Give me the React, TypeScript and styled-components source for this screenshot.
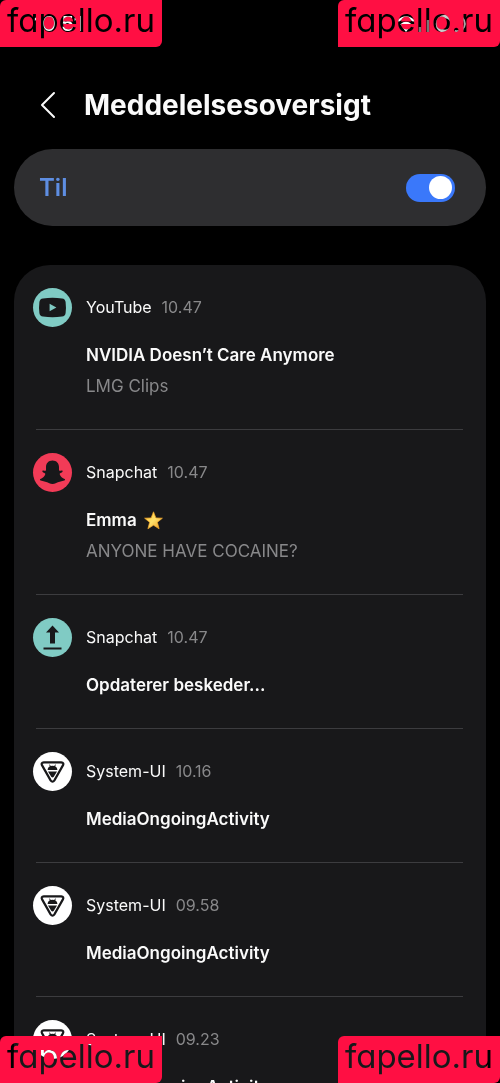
import React from "react";
import styled, { createGlobalStyle } from "styled-components";

const GlobalStyle = createGlobalStyle`
  * { box-sizing: border-box; }
  body {
    margin: 0;
    background: #000;
    color: #fafafa;
    font-family: Inter, "Noto Sans", sans-serif;
  }
`;

const Page = styled.div`
  position: relative;
  isolation: isolate;
  height: 100vh;
  overflow: hidden;
  background: #000;
`;

const StatusBar = styled.div`
  display: flex;
  align-items: center;
  justify-content: space-between;
  height: 48px;
  padding: 0 32px 0 34px;
`;

const Clock = styled.time`
  font-size: 20px;
  font-weight: 600;
  line-height: 24px;
`;

const Header = styled.header`
  display: flex;
  align-items: center;
  gap: 24px;
  height: 101px;
  padding: 12px 36px 0;
`;

const BackButton = styled.button`
  display: flex;
  padding: 0;
  border: 0;
  background: none;
  color: inherit;
`;

const Heading = styled.h1`
  margin: 0;
  font-size: 28px;
  font-weight: 700;
  line-height: 36px;
`;

const SwitchCard = styled.label`
  display: flex;
  align-items: center;
  justify-content: space-between;
  height: 77px;
  margin: 0 14px 39px;
  padding: 0 31px 0 25px;
  border-radius: 39px;
  background: #2e2e30;
  color: #5e8ee2;
  font-size: 24px;
  font-weight: 600;
`;

const Switch = styled.input`
  appearance: none;
  display: flex;
  align-items: center;
  justify-content: flex-start;
  width: 49px;
  height: 28px;
  margin: 0;
  padding: 0 3px;
  border-radius: 14px;
  background: #5a5a5e;

  &::before {
    content: "";
    width: 23px;
    height: 23px;
    border-radius: 50%;
    background: #fff;
  }

  &:checked {
    justify-content: flex-end;
    background: #3a78fa;
  }
`;

const List = styled.ul`
  margin: 0 14px;
  padding: 0;
  border-radius: 36px 36px 0 0;
  background: #18181a;
  list-style: none;
`;

const Item = styled.li`
  padding-top: 23px;
`;

const ItemHead = styled.div`
  display: flex;
  align-items: center;
  padding: 0 19px;
  font-size: 16px;
  line-height: 39px;
`;

const Badge = styled.span<{ $color: string }>`
  display: flex;
  width: 39px;
  height: 39px;
  margin-right: 14px;
  border-radius: 50%;
  background: ${(p) => p.$color};
`;

const Time = styled.time`
  margin-left: 10px;
  color: #88888a;
`;

const ItemBody = styled.div`
  padding: 13px 24px 27px 72px;
`;

const Title = styled.h2`
  display: flex;
  align-items: center;
  gap: 7px;
  margin: 0;
  font-size: 17px;
  font-weight: 600;
  line-height: 31px;
`;

const Text = styled.p`
  margin: 0;
  color: #88888a;
  font-size: 17px;
  line-height: 31px;
`;

const Divider = styled.hr`
  height: 1px;
  margin: 0 23px 0 22px;
  border: 0;
  background: #3c3c3f;
`;

/* A corner stamp whose letters are cut out, so the content below shows
   through them: the label multiplies, the red plate is screened on top. */
const Stamp = styled.div<{ $v: "top" | "bottom"; $h: "left" | "right" }>`
  position: absolute;
  ${(p) => p.$v}: 0;
  ${(p) => p.$h}: 0;
  width: 162px;
  height: 47px;
  color: #fff;
  font-size: 33px;
  line-height: 41px;
  font-feature-settings: "cv11";
  text-align: center;
  white-space: nowrap;
`;

const StampLabel = styled.span`
  display: block;
  height: 100%;
  border-radius: 6px 0 6px 0;
  background: #000;
  mix-blend-mode: multiply;
`;

const StampPlate = styled.span`
  position: absolute;
  inset: 0;
  border-radius: 6px 0 6px 0;
  background: #ff0f43;
  color: #000;
  mix-blend-mode: screen;

  &::before { content: "fapello.ru"; }
`;

type Kind = "youtube" | "ghost" | "upload" | "system";

const colors: Record<Kind, string> = {
  youtube: "#80cbc4",
  ghost: "#f23b57",
  upload: "#80cbc4",
  system: "#ffffff",
};

function Glyph({ kind }: { kind: Kind }) {
  const ink = "#18181a";
  return (
    <svg width="39" height="39" viewBox="0 0 39 39" aria-hidden="true">
      {kind === "youtube" && (
        <path
          fill={ink}
          fillRule="evenodd"
          d="M10 10.4Q19.500 9 29 10.400Q32.200 10.800 32.600 14Q33.300 19.500 32.600 25Q32.200 28.200 29 28.600Q19.500 30 10 28.600Q6.800 28.200 6.400 25Q5.700 19.500 6.400 14Q6.800 10.800 10 10.400ZM16.600 15.700V23.300L23.400 19.500Z"
        />
      )}
      {kind === "ghost" && (
        <path
          fill={ink}
          d="M19.500 7.400C23.500 7.400 26 10.200 26 14V17.600C27 18 28.200 17.200 29.200 17.500C30.300 18 29.500 19.200 28.200 19.800C27.200 20.200 26.400 20.500 26.800 21.600C27.600 23.600 29.400 25.400 31.600 26.100C32.300 26.400 32.100 27.200 31.300 27.600C29.500 28.300 27.500 28.600 25.800 29C23.500 29.500 22 31 19.500 31C17 31 15.500 29.500 13.200 29C11.500 28.600 9.500 28.300 7.700 27.600C6.900 27.200 6.700 26.400 7.400 26.100C9.600 25.400 11.400 23.600 12.200 21.600C12.600 20.500 11.800 20.200 10.800 19.800C9.500 19.200 8.700 18 9.800 17.500C10.800 17.200 12 18 13 17.600V14C13 10.200 15.500 7.400 19.500 7.400Z"
        />
      )}
      {kind === "upload" && (
        <path fill={ink} d="M19.500 7.500L26 14.500H22V25.500H17V14.500H13ZM10.500 29.500H28.500V31.500H10.500Z" />
      )}
      {kind === "system" && (
        <>
          <path
            d="M10.800 10.300H28.200Q31.300 10.600 29.900 13.400L21.400 28.300Q19.500 31 17.600 28.300L9.100 13.400Q7.700 10.600 10.800 10.300Z"
            fill="none"
            stroke={ink}
            strokeWidth="2.2"
          />
          <path
            fill={ink}
            d="M14.600 18C14.800 16 15.800 14.900 16.900 14.300L16.100 12.700L16.800 12.400L17.700 13.900Q19.500 13.400 21.300 13.900L22.200 12.400L22.900 12.700L22.100 14.300C23.200 14.900 24.200 16 24.400 18ZM15 19.500H24L20.800 24.800Q19.500 26.400 18.200 24.800Z"
          />
        </>
      )}
    </svg>
  );
}

function Star() {
  return (
    <svg width="19" height="19" viewBox="0 0 19 19" role="img" aria-label="star">
      <defs>
        <linearGradient id="gold" x1="0" y1="0" x2="1" y2="1">
          <stop offset="0" stopColor="#ffc52e" />
          <stop offset="0.5" stopColor="#ffe06a" />
          <stop offset="1" stopColor="#f09a1a" />
        </linearGradient>
      </defs>
      <path
        d="M9.500 .8L11.900 6.900L18.400 7.200L13.400 11.300L15.100 17.800L9.500 14.200L3.900 17.800L5.600 11.300L.6 7.200L7.100 6.900Z"
        fill="url(#gold)"
        stroke="#f0a52a"
        strokeWidth=".7"
        strokeLinejoin="round"
      />
    </svg>
  );
}

function StatusIcons() {
  return (
    <svg width="72" height="20" viewBox="0 0 72 20" fill="none" stroke="#fff" aria-hidden="true">
      <path d="M2 7Q10 0 18 7M5 11Q10 7 15 11" strokeWidth="2.200" />
      <path d="M10 18L7 14Q10 12 13 14Z" fill="#fff" stroke="none" />
      <path d="M24 18V13M28 18V10M32 18V6M36 18V2" stroke="#777" strokeWidth="2.500" />
      <circle cx="49" cy="10" r="7.500" stroke="#ccc" strokeWidth="3.500" />
      <path d="M62 3Q68 2 69 10Q68 18 59 17" stroke="#aaa" strokeWidth="1.800" />
    </svg>
  );
}

interface Notice {
  kind: Kind;
  app: string;
  time: string;
  title: string;
  star?: boolean;
  text?: string;
}

const notices: Notice[] = [
  { kind: "youtube", app: "YouTube", time: "10.47", title: "NVIDIA Doesn’t Care Anymore", text: "LMG Clips" },
  { kind: "ghost", app: "Snapchat", time: "10.47", title: "Emma", star: true, text: "ANYONE HAVE COCAINE?" },
  { kind: "upload", app: "Snapchat", time: "10.47", title: "Opdaterer beskeder..." },
  { kind: "system", app: "System-UI", time: "10.16", title: "MediaOngoingActivity" },
  { kind: "system", app: "System-UI", time: "09.58", title: "MediaOngoingActivity" },
  { kind: "system", app: "System-UI", time: "09.23", title: "MediaOngoingActivity" },
];

function CornerStamp({ v, h }: { v: "top" | "bottom"; h: "left" | "right" }) {
  return (
    <Stamp $v={v} $h={h}>
      <StampLabel>fapello.ru</StampLabel>
      <StampPlate aria-hidden="true" />
    </Stamp>
  );
}

export default function App() {
  return (
    <Page>
      <GlobalStyle />
      <StatusBar>
        <Clock>10.51</Clock>
        <StatusIcons />
      </StatusBar>
      <Header>
        <BackButton aria-label="Tilbage">
          <svg width="24" height="28" viewBox="0 0 24 28" fill="none" stroke="currentColor" strokeWidth="2" strokeLinecap="round" strokeLinejoin="round" aria-hidden="true">
            <path d="M18 2L6 14L18 26" />
          </svg>
        </BackButton>
        <Heading>Meddelelsesoversigt</Heading>
      </Header>
      <SwitchCard>
        Til
        <Switch type="checkbox" role="switch" defaultChecked />
      </SwitchCard>
      <List>
        {notices.map((n, i) => (
          <Item key={i}>
            <ItemHead>
              <Badge $color={colors[n.kind]}>
                <Glyph kind={n.kind} />
              </Badge>
              <span>{n.app}</span>
              <Time>{n.time}</Time>
            </ItemHead>
            <ItemBody>
              <Title>
                {n.title}
                {n.star && <Star />}
              </Title>
              {n.text && <Text>{n.text}</Text>}
            </ItemBody>
            {i < notices.length - 1 && <Divider />}
          </Item>
        ))}
      </List>
      <CornerStamp v="top" h="left" />
      <CornerStamp v="top" h="right" />
      <CornerStamp v="bottom" h="left" />
      <CornerStamp v="bottom" h="right" />
    </Page>
  );
}
